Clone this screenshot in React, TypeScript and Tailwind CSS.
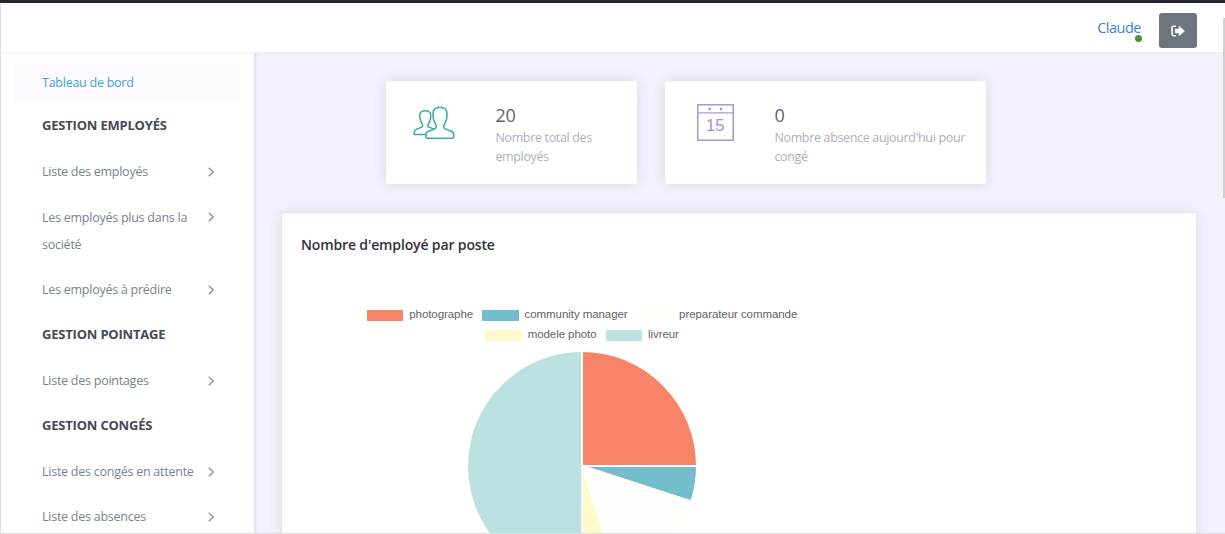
import React from "react";

type Entry = { kind: "title" | "link"; lines: string[] };

const entries: Entry[] = [
  { kind: "title", lines: ["GESTION EMPLOYÉS"] },
  { kind: "link", lines: ["Liste des employés"] },
  { kind: "link", lines: ["Les employés plus dans la", "société"] },
  { kind: "link", lines: ["Les employés à prédire"] },
  { kind: "title", lines: ["GESTION POINTAGE"] },
  { kind: "link", lines: ["Liste des pointages"] },
  { kind: "title", lines: ["GESTION CONGÉS"] },
  { kind: "link", lines: ["Liste des congés en attente"] },
  { kind: "link", lines: ["Liste des absences"] },
];

function Chevron() {
  return (
    <svg className="mt-[8.5px] h-[10px] w-[6px] shrink-0" viewBox="0 0 6 10" fill="none" stroke="#8b909c" strokeWidth="1.3">
      <path d="M0.8 0.7 5.2 5 0.8 9.3" />
    </svg>
  );
}

function Sidebar() {
  return (
    <aside className="w-[254px] shrink-0 bg-white pt-[9px] pl-[14px]">
      <div className="flex h-[40px] w-[226px] items-center bg-[#fcfaff] pt-[2px] pl-[28px] text-[12.5px] tracking-[-0.25px] text-[#3fa4d0]">
        Tableau de bord
      </div>
      <nav className="flex w-[200px] flex-col pt-[2px] pl-[28px]">
        {entries.map((e) =>
          e.kind === "title" ? (
            <h2 key={e.lines[0]} className="flex h-[45.4px] items-center pb-[1px] text-[13px] font-bold tracking-[-0.2px] whitespace-nowrap text-[#454957]">
              {e.lines[0]}
            </h2>
          ) : (
            <div key={e.lines[0]} className="flex justify-between py-[9.1px] text-[12.5px] leading-[27.2px] tracking-[-0.25px] whitespace-nowrap text-[#768393]">
              <div>
                {e.lines.map((l) => (
                  <div key={l}>{l}</div>
                ))}
              </div>
              <Chevron />
            </div>
          )
        )}
      </nav>
    </aside>
  );
}

function Header() {
  return (
    <header className="flex h-[50px] shrink-0 items-center justify-end border-b border-[#f4edf0] bg-white pt-[5px] pr-[28px]">
      <div className="relative mr-[18px] mb-[4px] text-[14.5px] leading-5 tracking-[-0.5px] text-[#3d85c6]">
        Claude
        <span className="absolute -right-px -bottom-[4px] h-[7px] w-[7px] rounded-full bg-[#43923f]" />
      </div>
      <button className="flex h-[35px] w-[38px] items-center justify-center rounded-[3px] bg-[#6c757d] pt-[2px]">
        <svg className="h-[12px] w-[14px]" viewBox="0 0 14 12">
          <path d="M5 1.3H2.6Q1 1.3 1 2.9V9.1Q1 10.7 2.6 10.7H5" fill="none" stroke="#fff" strokeWidth="1.6" />
          <path d="M8.2 1.2 13.5 6 8.2 10.8V7.9H4.3V4.1H8.2Z" fill="#fff" stroke="#fff" strokeWidth=".6" strokeLinejoin="round" />
        </svg>
      </button>
    </header>
  );
}

function UsersIcon() {
  return (
    <svg className="h-[34px] w-[42px]" viewBox="0 0 42 34" fill="none" stroke="#36ada0" strokeWidth="1.5" strokeLinejoin="round" strokeLinecap="round">
      <path d="M27 1.3C22.2 1.3 20 3.6 20 8.2C20 12.5 20.4 15 22.6 18.2C23.9 20.3 23.4 22.4 21.4 23.1L15.4 25.3C13.6 26 13 27.2 13 29V31Q13 32.2 14.2 32.2H39.6Q40.8 32.2 40.8 31V29C40.8 27.2 40.2 26 38.4 25.3L32.6 23.1C30.6 22.4 30.1 20.3 31.4 18.2C33.6 15 34 12.5 34 8.2C34 3.6 31.8 1.3 27 1.3Z" />
      <path d="M13 28.6H1.2V26.5C1.2 24.9 2 24 3.6 23.3L8.2 21.4C9.9 20.6 10.1 19.1 9 17.5C7.2 14.8 6.7 12.9 6.7 9.7C6.7 6.3 8.6 4.7 12.2 4.7C15.9 4.7 17.8 6.3 17.8 9.7C17.8 12.9 17.3 14.8 15.6 17.5C14.6 19.1 14.8 20.6 16.4 21.4L21.4 23.1" />
    </svg>
  );
}

function DateIcon() {
  return (
    <svg className="h-[37px] w-[37px]" viewBox="0 0 37 37">
      <rect x=".8" y=".8" width="35.4" height="35.4" fill="none" stroke="#ad9bd8" strokeWidth="1.6" />
      <path d="M1 8.9H36" stroke="#ad9bd8" strokeWidth="1.4" />
      <circle cx="12.6" cy="5" r="1.4" fill="#ad9bd8" />
      <circle cx="24" cy="5" r="1.4" fill="#ad9bd8" />
      <text x="18.2" y="27.2" textAnchor="middle" fontFamily="Liberation Sans, sans-serif" fontSize="16.5" fill="#a48fd4">15</text>
    </svg>
  );
}

function Stat({ icon, value, lines, className }: { icon: React.ReactNode; value: string; lines: string[]; className: string }) {
  return (
    <section className={`flex h-[103px] rounded-[3px] bg-white shadow-[0_0_14px_rgba(90,70,90,0.14)] ${className}`}>
      <div className="w-[82px] shrink-0">{icon}</div>
      <div className="whitespace-nowrap">
        <div className="text-[18px] leading-[22px] tracking-[-0.3px] text-[#5b6372]">{value}</div>
        <div className="pt-[1.5px] text-[12.5px] leading-[19px] tracking-[-0.34px] text-[#adb0bf]">
          {lines.map((l) => (
            <div key={l}>{l}</div>
          ))}
        </div>
      </div>
    </section>
  );
}

function Legend({ color, label }: { color: string; label: string }) {
  return (
    <div className="flex items-center gap-[6px]">
      <span className="mt-[2px] h-[11px] w-[36.5px]" style={{ backgroundColor: color }} />
      <span>{label}</span>
    </div>
  );
}

const slices = [
  { part: 0.25, color: "#f78469" },
  { part: 0.05, color: "#73bdcd" },
  { part: 0.15, color: "#fefffa" },
  { part: 0.05, color: "#fff9cc" },
  { part: 0.5, color: "#bbe2e1" },
];

function Pie() {
  let at = 0;
  const r = 115;
  const point = (f: number) => {
    const a = f * Math.PI * 2;
    return `${(116 + r * Math.sin(a)).toFixed(2)} ${(116 - r * Math.cos(a)).toFixed(2)}`;
  };
  return (
    <svg className="h-[232px] w-[232px] shrink-0" viewBox="0 0 232 232">
      {slices.map((s) => {
        const from = at;
        at += s.part;
        return <path key={s.color} d={`M116 116L${point(from)}A${r} ${r} 0 0 1 ${point(at)}Z`} fill={s.color} stroke="#fff" strokeWidth="2" />;
      })}
    </svg>
  );
}

export default function App() {
  return (
    <div className="relative flex h-[534px] w-[1225px] flex-col overflow-hidden bg-white font-['Open_Sans','Noto_Sans',sans-serif]">
      <div className="h-[3px] shrink-0 bg-[#28262e]" />
      <Header />
      <div className="flex min-h-0 flex-1">
        <Sidebar />
        <main className="flex min-w-0 flex-1 flex-col bg-[#f3f1fb] pt-[28px] pl-[28px] shadow-[inset_3px_0_4px_-2px_rgba(80,60,100,0.12)]">
          <div className="flex shrink-0 gap-[28px] pl-[104.4px]">
            <Stat className="w-[251px] pt-[23px] pl-[27px]" icon={<div className="pt-[1.5px]"><UsersIcon /></div>} value="20" lines={["Nombre total des", "employés"]} />
            <Stat className="w-[321px] pt-[23px] pl-[27px]" icon={<div className="pl-[4.5px]"><DateIcon /></div>} value="0" lines={["Nombre absence aujourd'hui pour", "congé"]} />
          </div>
          <section className="mt-[29px] h-[400px] w-[914px] shrink-0 rounded-[3px] bg-white pt-[22px] shadow-[0_0_14px_rgba(90,70,90,0.14)]">
            <h1 className="pl-[19px] text-[14px] leading-[20px] font-semibold tracking-[-0.14px] text-[#30333c]">Nombre d'employé par poste</h1>
            <div className="mt-[49px] flex w-[600px] flex-col items-center font-['Liberation_Sans',sans-serif] text-[11.5px] leading-[20px] tracking-[-0.07px] text-[#666166]">
              <div className="flex gap-[9px]">
                <Legend color="#f78469" label="photographe" />
                <Legend color="#73bdcd" label="community manager" />
                <Legend color="#fefffa" label="preparateur commande" />
              </div>
              <div className="flex gap-[9px]">
                <Legend color="#fff9cc" label="modele photo" />
                <Legend color="#bbe2e1" label="livreur" />
              </div>
              <div className="mt-[6px]">
                <Pie />
              </div>
            </div>
          </section>
        </main>
      </div>
      <div className="pointer-events-none absolute inset-x-0 top-[3px] bottom-0 border-b border-l border-[#dedde0]" />
      <div className="absolute top-[18px] right-0 h-[180px] w-[2px] bg-[#d0cfd4]" />
    </div>
  );
}
